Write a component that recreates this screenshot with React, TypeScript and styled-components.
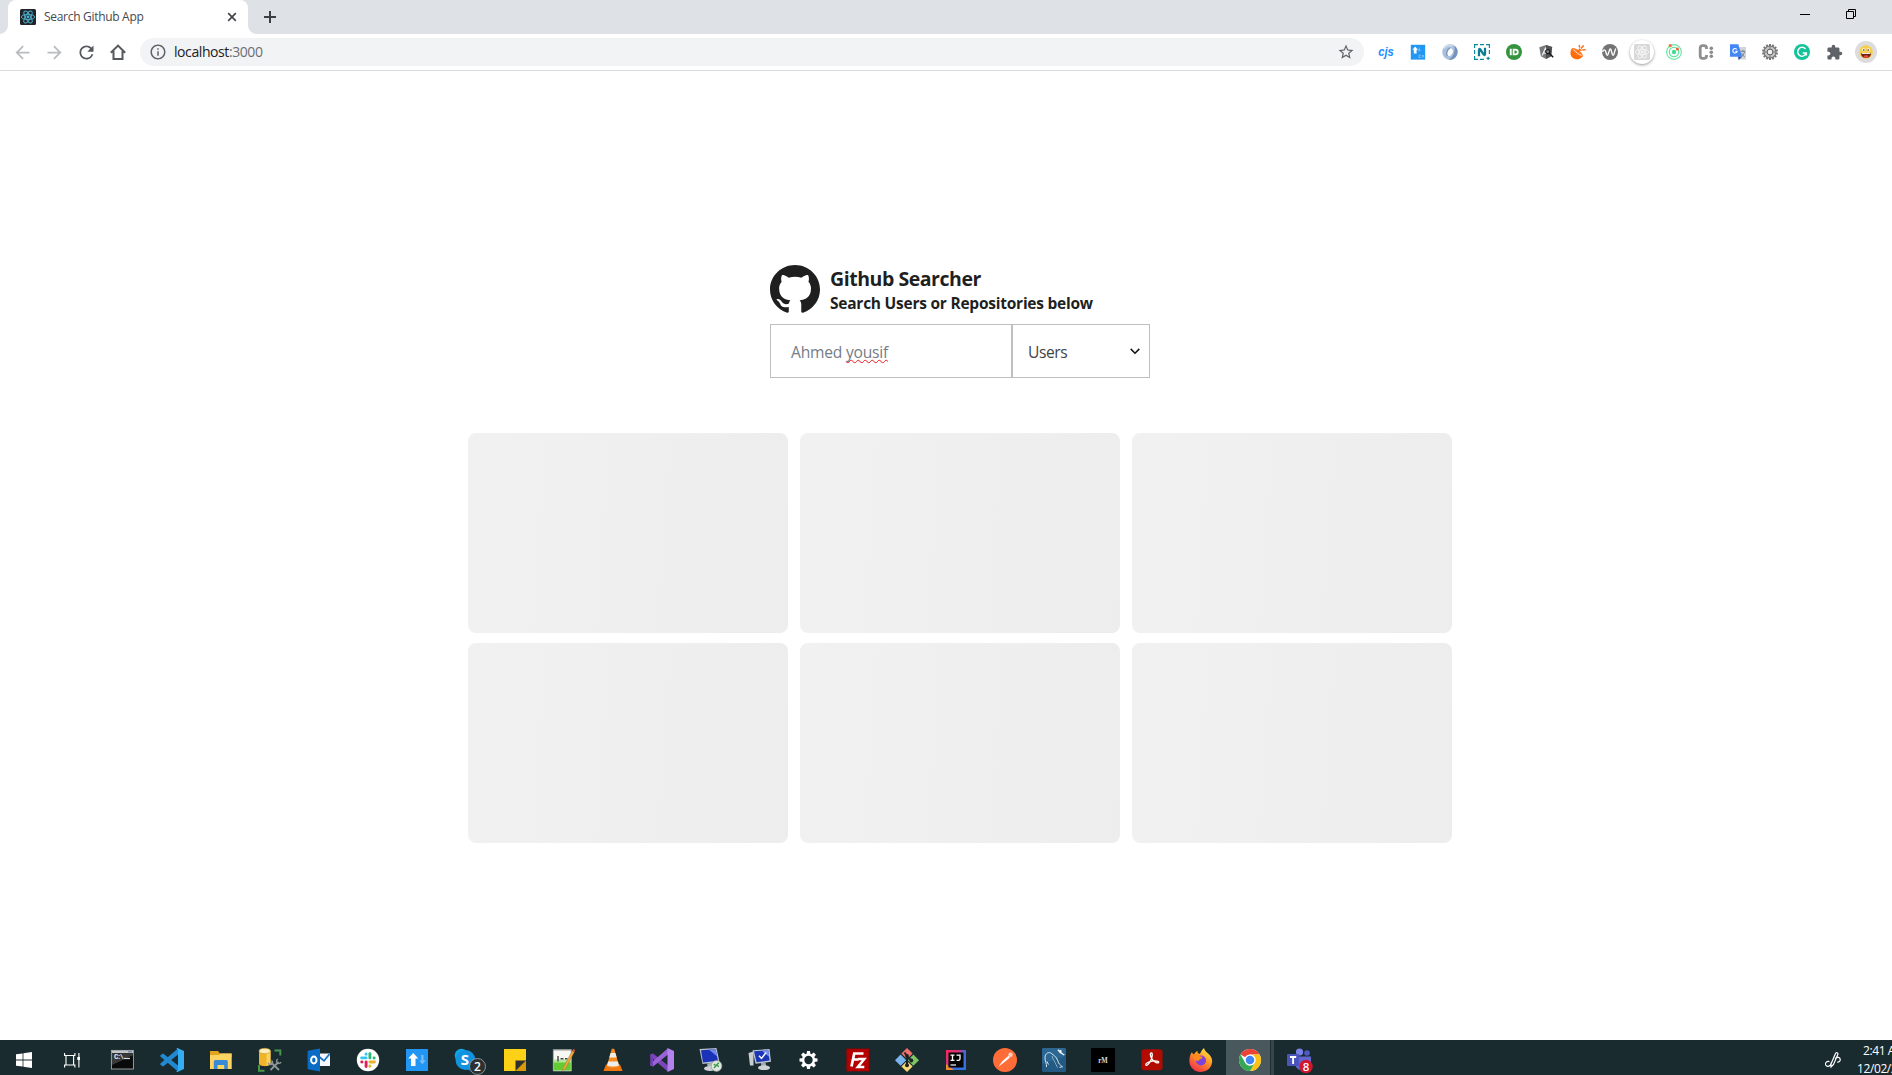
import React from "react";
import styled, { createGlobalStyle, css } from "styled-components";
import {
  MdArrowBack,
  MdArrowForward,
  MdExtension,
  MdInfoOutline,
  MdRefresh,
  MdStarBorder,
} from "react-icons/md";

const uiFont = `"Segoe UI", "Open Sans", "Noto Sans", sans-serif`;

const GlobalStyle = createGlobalStyle`
  * { box-sizing: border-box; }
  html, body { margin: 0; padding: 0; overflow: hidden; background: #fff; }
  body { font-family: ${uiFont}; }
  svg { display: block; flex: none; }
`;

const Screen = styled.div`
  width: 100vw;
  height: 1075px;
  overflow: hidden;
`;

const Desktop = styled.div`
  display: flex;
  flex-direction: column;
  width: 1920px;
  height: 1080px;
`;

/* ---------- browser frame ---------- */

const TabStrip = styled.div`
  display: flex;
  align-items: stretch;
  height: 34px;
  padding-left: 8px;
  background: #dee1e6;
`;

const Tab = styled.div`
  position: relative;
  display: flex;
  align-items: center;
  width: 240px;
  padding: 0 9px 0 12px;
  background: #fff;
  border-radius: 8px 8px 0 0;

  &::before,
  &::after {
    content: "";
    position: absolute;
    bottom: 0;
    width: 8px;
    height: 8px;
  }
  &::before {
    left: -8px;
    background: radial-gradient(circle at 0 0, transparent 7.5px, #fff 8px);
  }
  &::after {
    right: -8px;
    background: radial-gradient(circle at 100% 0, transparent 7.5px, #fff 8px);
  }
`;

const TabTitle = styled.span`
  flex: 1;
  margin-left: 8px;
  font-size: 12px;
  line-height: 16px;
  letter-spacing: -0.3px;
  color: #45494d;
  white-space: nowrap;
`;

const NewTab = styled.div`
  display: flex;
  align-items: center;
  margin-left: 16px;
`;

const WindowButtons = styled.div`
  display: flex;
  gap: 36px;
  margin-left: auto;
  margin-right: 64px;
  padding-top: 9px;
`;

const Toolbar = styled.div`
  display: flex;
  align-items: center;
  height: 37px;
  background: #fff;
  border-bottom: 1px solid #d9dbde;
`;

const NavButtons = styled.div`
  display: flex;
  width: 140px;
  padding-left: 6px;
`;

const NavButton = styled.div<{ $disabled?: boolean }>`
  display: flex;
  align-items: center;
  justify-content: center;
  width: 32px;
  height: 28px;
  color: ${(p) => (p.$disabled ? "#b9bbbe" : "#55595e")};
`;

const AddressBar = styled.div`
  display: flex;
  align-items: center;
  width: 1224px;
  height: 28px;
  padding: 0 9px 0 9px;
  border-radius: 14px;
  background: #f1f3f4;
  color: #5f6368;
`;

const Url = styled.span`
  flex: 1;
  margin-left: 7px;
  font-size: 14px;
  line-height: 20px;
  letter-spacing: -0.42px;
  color: #202124;
`;

const Port = styled.span`
  color: #6b6f74;
`;

const Extensions = styled.div`
  display: flex;
  margin-left: 6px;
`;

const ExtensionSlot = styled.div<{ $disc?: "raised" | "avatar" }>`
  display: flex;
  align-items: center;
  justify-content: center;
  width: 24px;
  height: 24px;
  margin: 0 4px;
  border-radius: 50%;
  ${(p) => p.$disc === "raised" && css`box-shadow: 0 1px 3px rgba(0, 0, 0, 0.4);`}
  ${(p) => p.$disc === "avatar" && css`background: #dcdcdc; width: 22px; height: 22px; margin: 1px 5px;`}
`;

/* ---------- page ---------- */

const Page = styled.main`
  display: flex;
  flex-direction: column;
  align-items: center;
  height: 969px;
  padding-top: 194px;
  background: #fff;
`;

const SearchBox = styled.section`
  width: 380px;
`;

const Brand = styled.header`
  display: flex;
  gap: 10px;
  height: 59px;
  color: #1f1f1f;
`;

const BrandText = styled.div`
  padding-top: 1px;
  white-space: nowrap;
`;

const Title = styled.h1`
  margin: 0;
  font-size: 19.5px;
  line-height: 25px;
  font-weight: 700;
  letter-spacing: -0.45px;
`;

const Subtitle = styled.h2`
  margin: 1px 0 0;
  font-size: 15.5px;
  line-height: 22px;
  font-weight: 700;
  letter-spacing: -0.24px;
`;

const Form = styled.div`
  display: flex;
  height: 54px;
  font-size: 15.6px;
  line-height: 22px;
`;

const Field = styled.div`
  display: flex;
  align-items: center;
  width: 242px;
  padding: 1px 20px 0;
  border: 1px solid #bfbfbf;
  color: #757b88;
  letter-spacing: -0.22px;
  white-space: pre;
`;

const Misspelled = styled.span`
  text-decoration: underline wavy #f01818 1px;
  text-underline-offset: 1px;
  text-decoration-skip-ink: none;
`;

const Select = styled.div`
  display: flex;
  align-items: center;
  justify-content: space-between;
  width: 138px;
  padding: 1px 9px 0 15px;
  border: 1px solid #bfbfbf;
  color: #3f4347;
  letter-spacing: -0.45px;
`;

const Results = styled.section`
  display: grid;
  grid-template-columns: repeat(3, 320px);
  grid-auto-rows: 200px;
  gap: 10px 12px;
  margin-top: 55px;
`;

const Skeleton = styled.div`
  border-radius: 8px;
  background: linear-gradient(94deg, #f1f1f1 0%, #ededed 100%);
`;

/* ---------- taskbar ---------- */

const Taskbar = styled.footer`
  display: flex;
  height: 40px;
  background: #1a2b2f;
`;

const SystemButton = styled.div`
  display: flex;
  align-items: center;
  justify-content: center;
  width: 48px;
`;

const Apps = styled.div`
  display: flex;
  gap: 1px;
  margin-left: 3px;
`;

const AppSlot = styled.div<{ $active?: boolean }>`
  display: flex;
  align-items: center;
  justify-content: center;
  width: 48px;
  ${(p) =>
    p.$active &&
    css`
      background: linear-gradient(90deg, #48585c 0 44px, #1f2d30 44px 45px, #374649 45px 48px);
    `}
`;

const Tray = styled.div`
  display: flex;
  align-items: center;
  margin-left: auto;
  margin-right: 4px;
`;

const Clock = styled.div`
  width: 60px;
  padding-left: 1px;
  text-align: left;
  font-size: 12px;
  line-height: 18px;
  letter-spacing: -0.4px;
  color: #fff;
  white-space: nowrap;
`;

const Time = styled.div`
  padding-left: 6px;
`;

/* ---------- drawings ---------- */

const Atom = ({ size, color, bg, sw = 1.1 }: { size: number; color: string; bg: string; sw?: number }) => (
  <svg width={size} height={size} viewBox="0 0 16 16">
    <rect width="16" height="16" rx="1.5" fill={bg} />
    <g fill="none" stroke={color} strokeWidth={sw}>
      <ellipse cx="8" cy="8" rx="6.7" ry="2.6" />
      <ellipse cx="8" cy="8" rx="6.7" ry="2.6" transform="rotate(60 8 8)" />
      <ellipse cx="8" cy="8" rx="6.7" ry="2.6" transform="rotate(120 8 8)" />
    </g>
    <circle cx="8" cy="8" r="1.4" fill={color} />
  </svg>
);

const HomeIcon = () => (
  <svg width="16" height="16" viewBox="0 0 16 16" fill="none" stroke="currentColor" strokeWidth="2">
    <path d="M.8 8.700 8 1.600l7.200 7.100M3.500 7v8h9V7" />
  </svg>
);

const GithubMark = () => (
  <svg width="50" height="49" viewBox="0 0 16 16" preserveAspectRatio="none" fill="currentColor">
    <path d="M8 0C3.58 0 0 3.58 0 8c0 3.54 2.29 6.53 5.47 7.59.4.07.55-.17.55-.38 0-.19-.01-.82-.01-1.49-2.01.37-2.53-.49-2.69-.94-.09-.23-.48-.94-.82-1.13-.28-.15-.68-.52-.01-.53.63-.01 1.08.58 1.23.82.72 1.21 1.87.87 2.33.66.07-.52.28-.87.51-1.07-1.78-.2-3.64-.89-3.64-3.95 0-.87.31-1.59.82-2.15-.08-.2-.36-1.02.08-2.12 0 0 .67-.21 2.2.82.64-.18 1.32-.27 2-.27s1.36.09 2 .27c1.53-1.04 2.2-.82 2.2-.82.44 1.1.16 1.92.08 2.12.51.56.82 1.27.82 2.15 0 3.07-1.87 3.75-3.65 3.95.29.25.54.73.54 1.48 0 1.07-.01 1.93-.01 2.2 0 .21.15.46.55.38A8.01 8.01 0 0 0 16 8c0-4.42-3.58-8-8-8z" />
  </svg>
);

const Ext = ({ children }: { children: React.ReactNode }) => (
  <svg width="16" height="16" viewBox="0 0 16 16" overflow="visible">
    {children}
  </svg>
);

const App24 = ({ children }: { children: React.ReactNode }) => (
  <svg width="24" height="24" viewBox="0 0 24 24" overflow="visible">
    {children}
  </svg>
);

const teeth = (n: number) => Array.from({ length: n }, (_, i) => (360 / n) * i);

const extensionIcons: { name: string; disc?: "raised" | "avatar"; icon: React.ReactNode }[] = [
  {
    name: "cjs",
    icon: (
      <Ext>
        <text x="8" y="11.5" textAnchor="middle" textLength="15.5" lengthAdjust="spacingAndGlyphs" fontFamily="Liberation Sans" fontStyle="italic" fontWeight="700" fontSize="12.5" fill="#1a8cff">cjs</text>
      </Ext>
    ),
  },
  {
    name: "transfer",
    icon: (
      <Ext>
        <rect x=".8" y=".8" width="14.4" height="14.8" fill="#2196f3" />
        <path d="M5.2 2.6 8 5.8H6.600V9.600H3.800V5.800H2.400z" fill="#fff" />
        <path d="M9.3 3.5v3.200M8.200 5.800l1.100 1.300 1.100-1.300" stroke="#8fc9fa" fill="none" strokeWidth=".9" />
        <path d="M11 11.200H9v2.300h2M12 11l2 2.600M14 11l-2 2.600" stroke="#8fc9fa" fill="none" strokeWidth=".8" />
      </Ext>
    ),
  },
  {
    name: "swirl",
    icon: (
      <Ext>
        <circle cx="8" cy="8" r="7.8" fill="#a9bfdb" />
        <path d="M12.500 1.800A7.800 7.800 0 0 1 6.500 15.600C11.500 13.500 13.500 7 12.500 1.800z" fill="#7292ba" />
        <path d="M2 4.500C4.500 1.200 8 1 10.500 2.300" stroke="#d2deec" strokeWidth="1.500" fill="none" />
        <ellipse cx="8" cy="8.200" rx="2.700" ry="3.900" fill="#fff" transform="rotate(22 8 8)" />
        <path d="M5.300 12c-1.500-3 0-6.500 2.700-8" stroke="#6f8fb8" strokeWidth="1.200" fill="none" />
      </Ext>
    ),
  },
  {
    name: "nimbus",
    icon: (
      <Ext>
        <path d="M.6 4V.6H4M6 .6h4M12 .6h3.400V4M.6 6v4M15.400 6v4M.6 12v3.400H4M6 15.400h4" stroke="#0d8a9e" strokeWidth="1.200" fill="none" />
        <path d="M12.500 14.400h3.300M14.150 12.800v3.300" stroke="#0d8a9e" strokeWidth="1.200" />
        <path d="M5 12.300V6.300q0-2.300 1.500-.6l3 4.600q1.500 1.700 1.500-.6V3.800" stroke="#0d7e92" strokeWidth="2.300" fill="none" />
      </Ext>
    ),
  },
  {
    name: "pushbullet",
    icon: (
      <Ext>
        <circle cx="8" cy="8" r="8" fill="#34933f" />
        <path d="M3.800 4.700h1.900v6.600H3.800zM6.700 4.700h2.700a3.300 3.300 0 0 1 0 6.600H6.700z" fill="#fff" />
        <path d="M8.500 6.400h.8a1.600 1.600 0 0 1 0 3.200h-.8z" fill="#34933f" />
      </Ext>
    ),
  },
  {
    name: "augury",
    icon: (
      <Ext>
        <path d="M8 1 14.200 3l-1.100 9.200L8 15l-5.100-2.800L1.300 3.200z" fill="#77797a" />
        <path d="M8 1 14.200 3l-1.100 9.200L8 15z" fill="#505253" />
        <path d="M4.200 11.500 7.400 4.200 9 8M5.500 9.200h3" stroke="#f2f2f2" strokeWidth="1.200" fill="none" />
        <circle cx="9.800" cy="7.600" r="2" fill="#8b8d8e" stroke="#17191a" strokeWidth="1.100" />
        <path d="m11.200 9.200 4 4" stroke="#17191a" strokeWidth="1.500" />
      </Ext>
    ),
  },
  {
    name: "dish",
    icon: (
      <Ext>
        <path d="M2.300 4.200 12.800 12.200C10 16.200 5 16 2.300 13.500-.3 11 0 7 2.300 4.200z" fill="#ff6a0a" />
        <path d="M2.300 4.200C5 2.800 13.800 9 12.800 12.200 9 13.500 1 7.500 2.300 4.200z" fill="#ff7d2a" />
        <path d="M3.600 5.500C6 8.500 8.500 10.300 11.800 11.400" stroke="#ffe6d6" strokeWidth=".9" fill="none" />
        <path d="m7.600 8.200 2-2.600M9 4.700l2.500 2M9.700 3.600 9 1M11 4.500l2.700-3M12.300 6l3.500-.4" stroke="#ff6a0a" strokeWidth="1.400" />
      </Ext>
    ),
  },
  {
    name: "wave",
    icon: (
      <Ext>
        <circle cx="8" cy="8" r="8" fill="#737373" />
        <path d="M.5 8C1.500 5.500 2.800 5.200 3.500 7l1.100 3.500c.4 1 1 1 1.400 0l1.600-4.700c.4-1.200 1-1.200 1.400 0l1.400 4.700c.4 1 1 1 1.400 0l1.900-6" stroke="#fff" strokeWidth="1.300" fill="none" />
      </Ext>
    ),
  },
  { name: "react", disc: "raised", icon: <Atom size={16} color="#f5f5f5" bg="#d8d8d8" sw={0.9} /> },
  {
    name: "radar",
    icon: (
      <Ext>
        <g fill="none" stroke="#63e6a2">
          <circle cx="8" cy="8" r="7.400" strokeWidth="1.100" />
          <circle cx="8" cy="8" r="4.700" strokeWidth="1.300" />
        </g>
        <circle cx="8" cy="8" r="2.200" fill="#45dd91" />
        <circle cx="4.200" cy="1.700" r="1.600" fill="#f4743b" />
        <circle cx="11.400" cy="5" r="1.500" fill="#f4602f" />
      </Ext>
    ),
  },
  {
    name: "colon",
    icon: (
      <Ext>
        <path d="M8.500 5V4Q8.500 1.700 6 1.700H4.700Q2.200 1.700 2.200 4v8q0 2.300 2.500 2.300H6Q8.500 14.300 8.500 12v-1" stroke="#8f8f8f" strokeWidth="2.800" fill="none" />
        <g fill="#8b8b8b">
          <circle cx="13.300" cy="4.300" r="1.800" />
          <circle cx="13.300" cy="8.300" r="1.800" />
          <circle cx="13.300" cy="12.300" r="1.800" />
        </g>
      </Ext>
    ),
  },
  {
    name: "translate",
    icon: (
      <Ext>
        <path d="M6 3h10v12.500H8z" fill="#d3d5d8" />
        <path d="M0 .3h8.300l3.900 12.500H0z" fill="#4387f5" />
        <path d="M8 12.800h4.200l-3.600 3.200z" fill="#2f55b8" />
        <path d="M10.500 7.300h4.800M12.900 5.800v1.500M11.500 12.500c1.700-1 2.700-3 3-5M11.700 9c.5 1.800 1.700 3 3 3.700" stroke="#6e7a8c" strokeWidth=".9" fill="none" />
        <path d="M6.700 5.300A2.200 2.200 0 1 0 7.200 7.200H5.200" stroke="#fff" strokeWidth="1.100" fill="none" />
      </Ext>
    ),
  },
  {
    name: "gear",
    icon: (
      <Ext>
        {teeth(14).map((a) => (
          <rect key={a} x="7" y="0" width="2" height="3" fill="#777" transform={`rotate(${a} 8 8)`} />
        ))}
        <circle cx="8" cy="8" r="6" fill="#c4c4c4" stroke="#6a6a6a" strokeWidth="1" />
        <circle cx="8" cy="8" r="2.900" fill="#f2f2f2" stroke="#5c5c5c" strokeWidth="1" />
        <path d="M8 2.800v2M8 11.200v2M2.800 8h2M11.200 8h2" stroke="#777" />
      </Ext>
    ),
  },
  {
    name: "grammar",
    icon: (
      <Ext>
        <circle cx="8" cy="8" r="8" fill="#15c39a" />
        <path d="M11.500 5A4.400 4.400 0 1 0 12.200 9.300M8.700 9h3.600v2.600" stroke="#fff" strokeWidth="1.500" fill="none" />
      </Ext>
    ),
  },
  { name: "extensions", icon: <MdExtension size={17} color="#5f6368" /> },
  {
    name: "avatar",
    disc: "avatar",
    icon: (
      <svg width="14" height="14" viewBox="0 0 14 14">
        <circle cx="7" cy="7" r="6.800" fill="#f5cf4c" />
        <path d="M2 8h10c0 3.200-2 5-5 5S2 11.200 2 8z" fill="#6d1f16" />
        <path d="M2.700 8h8.600v.9H2.700z" fill="#fff" />
        <ellipse cx="7" cy="11.600" rx="2.600" ry="1.300" fill="#e9483e" />
        <ellipse cx="4.600" cy="4.700" rx="1.500" ry="1.700" fill="#fff6d8" />
        <ellipse cx="9.400" cy="4.700" rx="1.500" ry="1.700" fill="#fff6d8" />
        <circle cx="4.800" cy="5" r=".8" fill="#3b2a10" />
        <circle cx="9.200" cy="5" r=".8" fill="#3b2a10" />
      </svg>
    ),
  },
];

const appIcons: { name: string; active?: boolean; icon: React.ReactNode }[] = [
  {
    name: "terminal",
    icon: (
      <App24>
        <rect x=".4" y="2.400" width="22" height="18.600" fill="#0a0a0a" stroke="#a4a8aa" strokeWidth=".9" />
        <rect x=".8" y="2.600" width="21.200" height="2.500" fill="#c3c7ca" />
        <path d="M17 3.800h4" stroke="#5a6ea0" />
        <path d="M1 5.200h21v2L1 17z" fill="#3a3a3a" />
        <text x="3" y="11" fontFamily="Liberation Mono" fontWeight="700" fontSize="7" fill="#eee" textLength="10">C:\</text>
        <path d="M13 10.500h6" stroke="#ddd" strokeWidth="1.200" />
      </App24>
    ),
  },
  {
    name: "code",
    icon: (
      <App24>
        <path d="m.3 7.300 2.200-1.600 1 .1L18 17.500V23.500L.6 8.700z" fill="#1f8ad2" />
        <path d="m.3 16.700 2.200 1.600 1-.1L18 6.500V.5L.6 15.300z" fill="#2488cf" />
        <path d="M17.500 0 24 3v18l-6.500 3c-.6 0-.9-.3-1.200-.6l1.700-1.400V2L16.300.6z" fill="#35adf2" />
      </App24>
    ),
  },
  {
    name: "files",
    icon: (
      <App24>
        <path d="M1 3h8l2 2.500h11.500V9H1z" fill="#e3a41b" />
        <path d="M1 7h9l1.500-1.500h11.200V21H1z" fill="#fcd462" />
        <path d="M4.800 21v-7.500q0-1.500 1.500-1.500h11q1.500 0 1.500 1.500V21h-3.600v-4H8.500v4z" fill="#3b8ad8" />
      </App24>
    ),
  },
  {
    name: "database",
    icon: (
      <App24>
        <path d="M1 3v12.500c0 3.500 11.500 3.500 11.500 0V3z" fill="#f0b429" />
        <path d="M8.500 5v12.600c2.500-.3 4-1 4-2.100V3z" fill="#fbd25f" />
        <ellipse cx="6.750" cy="3" rx="5.750" ry="2.700" fill="#fdeeb9" stroke="#cf9516" strokeWidth=".6" />
        <path d="M16.500 2.500h5.800V7.500M1 17v5.800h5.500" stroke="#46964b" strokeWidth="2" fill="none" />
        <path d="m12.500 22 8-8M13 14.500l8 7.500" stroke="#8e9698" strokeWidth="1.800" />
        <path d="M10.200 14.500a2.200 2.200 0 1 0 3-2M20 11a2.300 2.300 0 1 0 3 3" stroke="#8e9698" strokeWidth="1.300" fill="none" />
      </App24>
    ),
  },
  {
    name: "mail",
    icon: (
      <App24>
        <path d="M12 5.500h11V18H12z" fill="#f4f8fc" />
        <path d="m12.500 9 4.500 3.800L22.600 6" stroke="#1671c5" strokeWidth="1.700" fill="none" />
        <path d="M.6 2.800 13 .4v23.200L.6 21.200z" fill="#0a6cc4" />
        <ellipse cx="6.800" cy="12" rx="2.700" ry="3.500" fill="none" stroke="#fff" strokeWidth="2" />
      </App24>
    ),
  },
  {
    name: "slack",
    icon: (
      <App24>
        <circle cx="12" cy="12" r="11.200" fill="#fff" />
        <g strokeWidth="2.900" strokeLinecap="round">
          <path d="M10.100 6v.2" stroke="#36c5f0" /><path d="M5.600 9.900h4.500" stroke="#36c5f0" />
          <path d="M13.900 5.600v4.300" stroke="#2eb67d" /><path d="M18 10h.2" stroke="#2eb67d" />
          <path d="M13.900 14h4.500" stroke="#ecb22e" /><path d="M13.900 18v.2" stroke="#ecb22e" />
          <path d="M10.100 14v4.500" stroke="#e01e5a" /><path d="M5.700 14h.3" stroke="#e01e5a" />
        </g>
      </App24>
    ),
  },
  {
    name: "transfer",
    icon: (
      <App24>
        <rect x="1" y="1" width="22" height="22" fill="#2196f3" />
        <path d="M8.300 5 13.300 10.600h-2.800V18H6v-7.400H3.200z" fill="#fff" />
        <path d="M16.300 7h2.200v5.500h2.200l-3.300 3.700-3.300-3.700h2.200z" fill="#79bef8" />
      </App24>
    ),
  },
  {
    name: "skype",
    icon: (
      <App24>
        <circle cx="7.500" cy="7.500" r="6.800" fill="#0fa5e8" />
        <circle cx="16" cy="16" r="6.500" fill="#0078d4" />
        <circle cx="11.500" cy="12" r="10" fill="#1193df" />
        <text x="11" y="17.200" textAnchor="middle" fontFamily="Open Sans" fontWeight="700" fontSize="15" fill="#fff">S</text>
        <circle cx="23.500" cy="18.500" r="8" fill="#2b3033" stroke="#8c9395" strokeWidth="1" />
        <text x="23.500" y="23" textAnchor="middle" fontFamily="Open Sans" fontWeight="600" fontSize="12" fill="#fff">2</text>
      </App24>
    ),
  },
  {
    name: "notes",
    icon: (
      <App24>
        <path d="M1 1h22v11L12.500 23H1z" fill="#fcd116" />
        <path d="M12.500 12.500H23L12.500 23z" fill="#303030" />
        <path d="M23 12.500V23H12.500z" fill="#d99a08" />
      </App24>
    ),
  },
  {
    name: "notepad",
    icon: (
      <App24>
        <path d="M1.300 1.500h18v21.500h-18z" fill="#f7f7f3" stroke="#a7aaa5" strokeWidth=".7" />
        <path d="M1.800 13.500h17v9h-17z" fill="#62cc32" />
        <path d="M1.800 11.500h17v3h-17z" fill="#b4e79a" />
        <path d="M1.500 2h17.500" stroke="#777" strokeDasharray="1 1" strokeWidth="1.600" />
        <path d="M6 8v5.500M8.500 10.700h3M13 10.700h2.500" stroke="#444" strokeWidth="1.400" />
        <path d="M11 20 20.500 2.500l2 1.200L13.500 20.700l-3 2z" fill="#eda93c" stroke="#99662b" strokeWidth=".4" />
        <path d="m20.300 2.700 1-1.900 2 1.100-1 2z" fill="#c9493f" />
      </App24>
    ),
  },
  {
    name: "cone",
    icon: (
      <App24>
        <path d="M5 16.500h14l2.500 6.500h-19z" fill="#ef7810" />
        <path d="M10.800 .8h2.400L18.300 18.500c-3 2-9.600 2-12.600 0z" fill="#f68b1f" />
        <path d="M9.600 5h4.800l1.300 4.500H8.300zM7.100 13.500h9.800l1.100 3.900c-3 1.500-9 1.500-12 0z" fill="#ededeb" />
      </App24>
    ),
  },
  {
    name: "studio",
    icon: (
      <App24>
        <path d="M.3 6.500 3 5.500 18 17.500v6.200L.3 8.500z" fill="#7a46b9" />
        <path d="m.3 17.500 2.700 1L18 6.500V.3L.3 15.500z" fill="#9b62d6" />
        <path d="M.3 6.500 3 5.500v13l-2.700-1z" fill="#7440b5" />
        <path d="M17.500 0 24 3v18l-6.500 3z" fill="#b482ec" />
      </App24>
    ),
  },
  {
    name: "remote",
    icon: (
      <App24>
        <path d="M.5 1 17.500 0l3 14-17 2z" fill="#b8c1cd" />
        <path d="M2 2.200 16.500 1.300l2.500 11.400-15 1.800z" fill="#1932b8" />
        <path d="M10 1.800 16.500 1.300l1.700 7.200z" fill="#6f86ea" />
        <path d="m8 15.500 6-.7 1 4.200-6 1z" fill="#aeb5bc" />
        <ellipse cx="11" cy="20.500" rx="6" ry="2.500" fill="#cdd1d4" />
        <circle cx="17.500" cy="18" r="5.400" fill="#e2e7e2" stroke="#8d9691" strokeWidth=".7" />
        <path d="m14.800 16 2.100 1.800-1.900 2.300M19.800 14.700l-2 2 2 2" stroke="#3d9d49" strokeWidth="1.500" fill="none" />
      </App24>
    ),
  },
  {
    name: "monitor",
    icon: (
      <App24>
        <path d="m.5 5 5-1.500v14L2 17.500z" fill="#c9ced1" />
        <path d="M4.500 2.200 21.500 1l1.500 12.800-15.500 2z" fill="#bcc6d2" />
        <path d="M6 3.300 20.300 2.300l1.300 10.200-13 1.800z" fill="#1b35b5" />
        <path d="M14 2.700l6.300-.4.800 6.500z" fill="#7b93ec" />
        <path d="m11 7.800 2.500 2.700 4.500-6" stroke="#fff" strokeWidth="1.400" fill="none" />
        <path d="m13 15 4.500-.6 1 4.600h-5z" fill="#a6adb3" />
        <ellipse cx="16" cy="19.700" rx="6" ry="2.400" fill="#cfd3d6" />
      </App24>
    ),
  },
  {
    name: "settings",
    icon: (
      <App24>
        {teeth(8).map((a) => (
          <path key={a} d="M10 3h3l.6 4H9.400z" fill="#fff" transform={`rotate(${a} 11.500 12)`} />
        ))}
        <circle cx="11.500" cy="12" r="5.400" fill="none" stroke="#fff" strokeWidth="2.400" />
      </App24>
    ),
  },
  {
    name: "ftp",
    icon: (
      <App24>
        <rect x=".6" y=".8" width="22.500" height="22.500" fill="#b30000" stroke="#8b0000" strokeWidth="1" strokeDasharray="1 1" />
        <path d="M5.500 18.500 8.200 5.500h9.300M7 11.500h5.500" stroke="#fff" strokeWidth="2.700" fill="none" />
        <path d="M12 11h6.300L11.800 19h6.500" stroke="#fff" strokeWidth="2.500" fill="none" />
      </App24>
    ),
  },
  {
    name: "git",
    icon: (
      <App24>
        <path d="m12 0 5.600 5.600L12 11.200 6.400 5.600z" fill="#f0706c" />
        <path d="m5.600 6.600 5.600 5.600-5.600 5.600L0 12.200z" fill="#79b5ef" />
        <path d="m18.400 6.600 5.600 5.600-5.600 5.600-5.600-5.600z" fill="#7fc463" />
        <path d="m12 13 5.600 5.500L12 24l-5.600-5.500z" fill="#f5d873" />
        <path d="M9.500 4.500 12 8v10M12 8.500l4.500 4" stroke="#182426" strokeWidth="2" fill="none" />
        <circle cx="12" cy="8" r="1.900" fill="#182426" /><circle cx="16.300" cy="12.500" r="1.900" fill="#182426" /><circle cx="12" cy="17.200" r="2" fill="#182426" />
      </App24>
    ),
  },
  {
    name: "idea",
    icon: (
      <App24>
        <defs>
          <linearGradient id="idea" x1="0" y1="0" x2="1" y2="1">
            <stop offset="0" stopColor="#fe2857" /><stop offset=".35" stopColor="#d6337b" />
            <stop offset=".5" stopColor="#4967d9" /><stop offset="1" stopColor="#2876e6" />
          </linearGradient>
        </defs>
        <rect x="2" y="2" width="20" height="20" fill="url(#idea)" />
        <path d="M2 16v6h8z" fill="#f08a35" />
        <rect x="4.500" y="4.500" width="15" height="15" fill="#050505" />
        <path d="M6.500 7.200h4M8.500 7.200v5M6.500 12.300h4M12.500 7.200H16v3.500q0 1.700-1.700 1.700h-1.800" stroke="#fff" strokeWidth="1.300" fill="none" />
        <path d="M6.500 17H12" stroke="#fff" strokeWidth="1.200" />
      </App24>
    ),
  },
  {
    name: "postman",
    icon: (
      <App24>
        <circle cx="12" cy="12" r="12" fill="#ff6c37" />
        <path d="M5.500 18.500 9.500 13l6-5.200 1.500 1.700-6 4.900z" fill="#fff" />
        <circle cx="17.500" cy="6.800" r="2.200" fill="#fbd2c2" />
      </App24>
    ),
  },
  {
    name: "mysql",
    icon: (
      <App24>
        <rect width="24" height="24" rx="1.500" fill="#235a83" />
        <path d="M0 1.500Q0 0 1.500 0h21Q24 0 24 1.500V8L0 16z" fill="#2c6794" />
        <path d="M4.500 19c.3-4-1.700-5.500-1.500-9.500C3.200 5 7 3.500 9.500 5.500c4 2.500 6 5.500 7 9.300 1 2 3 3 4 4l-3 .5M5 13.500l1.500 3" stroke="#dce8ef" strokeWidth="1" fill="none" />
        <path d="M10 8c.7 3.500 3 5.500 4 8.500l1.500 3" stroke="#9dbdd1" strokeWidth=".8" fill="none" />
        <path d="M16 1.800 18.300 4.500l4 2.500M18.500 2l.5 2.500" stroke="#fff" strokeWidth="1.400" fill="none" />
      </App24>
    ),
  },
  {
    name: "rm",
    icon: (
      <App24>
        <rect width="24" height="24" fill="#000" />
        <text x="12" y="14.800" textAnchor="middle" textLength="9.500" lengthAdjust="spacingAndGlyphs" fontFamily="Liberation Serif" fontWeight="700" fontSize="7.500" fill="#ddd">rM</text>
      </App24>
    ),
  },
  {
    name: "pdf",
    icon: (
      <App24>
        <rect x="1.500" y="1.200" width="21" height="21" rx="3" fill="#b30b00" />
        <path d="M11.500 5c-2 0-1.200 3 .5 6 1.800 3.200 5.700 4.500 6.600 3.500 1-1.200-2.900-2.200-6.500-1.400-3.600.7-7 2.400-6.300 3.900.8 1.500 3.600-1.600 5-4.600 1.500-3 2-7.400.7-7.400z" stroke="#fff" strokeWidth="1.300" fill="none" />
      </App24>
    ),
  },
  {
    name: "firefox",
    icon: (
      <App24>
        <defs>
          <linearGradient id="fox" x1=".8" y1="0" x2=".2" y2="1">
            <stop offset="0" stopColor="#fff04a" /><stop offset=".4" stopColor="#ff9a23" /><stop offset="1" stopColor="#f0294f" />
          </linearGradient>
        </defs>
        <path d="M15 0c.5 2.500 2.300 3.700 3.800 5.300 2.300 2 4.400 4.500 4.400 8A11.400 10.900 0 0 1 .4 13c0-3.500.8-6.500 2.400-8.700l1.700 2.200C6 5.200 7 3.500 8.400 2.700c-.2 1.800.6 2.800 2.300 3.200C12 4.500 12.700 1.800 15 0z" fill="url(#fox)" />
        <circle cx="12" cy="12.500" r="5" fill="#7b42e0" />
        <path d="M4.500 6.500c3-1 5.500 0 6.500 1.800 1.500.2 2.500.5 2.700 1.200-1.500 2-4 1.400-3.700 3.500-2-.3-4.500 0-5-2.500z" fill="#ff8b1f" />
      </App24>
    ),
  },
  {
    name: "chrome",
    active: true,
    icon: (
      <App24>
        <circle cx="12" cy="12" r="11" fill="#fff" />
        <path d="M12 1a11 11 0 0 1 9.530 5.500H12A5.500 5.500 0 0 0 7.240 9.250L2.470 6.500A11 11 0 0 1 12 1z" fill="#ea4335" />
        <path d="M21.530 6.500A11 11 0 0 1 12 23l4.760-8.250A5.500 5.500 0 0 0 12 6.500z" fill="#fbc116" />
        <path d="M12 23A11 11 0 0 1 2.470 6.500l4.770 8.250A5.500 5.500 0 0 0 16.760 14.750z" fill="#34a853" />
        <circle cx="12" cy="12" r="5.500" fill="#fff" />
        <circle cx="12" cy="12" r="4.300" fill="#4285f4" />
      </App24>
    ),
  },
  {
    name: "teams",
    icon: (
      <App24>
        <circle cx="12.500" cy="4" r="3.600" fill="#7b83eb" />
        <circle cx="20" cy="5" r="2.800" fill="#5059c9" />
        <path d="M8 8.500h16v9q-1 5-7 5.500-7-.5-9-6z" fill="#6068d2" />
        <rect x="0" y="6" width="12" height="12" rx="1" fill="#4b53bc" />
        <path d="M3 9h6.200M6.100 9v7" stroke="#fff" strokeWidth="1.900" />
        <circle cx="19" cy="18.500" r="6.700" fill="#d3152f" />
        <text x="19" y="22.700" textAnchor="middle" fontFamily="Open Sans" fontWeight="600" fontSize="11.500" fill="#fff">8</text>
      </App24>
    ),
  },
];

export default function App() {
  return (
    <Screen>
      <GlobalStyle />
      <Desktop>
        <TabStrip>
          <Tab>
            <Atom size={16} color="#4eb4ce" bg="#20232a" sw={0.9} />
            <TabTitle>Search Github App</TabTitle>
            <svg width="14" height="14" viewBox="0 0 14 14">
              <path d="m3.200 3.200 7.600 7.600m0-7.600-7.600 7.600" stroke="#44474b" strokeWidth="1.700" />
            </svg>
          </Tab>
          <NewTab>
            <svg width="12" height="12" viewBox="0 0 12 12">
              <path d="M6 0v12M0 6h12" stroke="#3c4043" strokeWidth="2" />
            </svg>
          </NewTab>
          <WindowButtons>
            <svg width="10" height="10" viewBox="0 0 10 10">
              <path d="M0 5.500h10" stroke="#000" />
            </svg>
            <svg width="10" height="10" viewBox="0 0 10 10">
              <path d="M.5 2.500h7v7h-7zM2.500 2.500v-2h7v7h-2" stroke="#000" fill="none" />
            </svg>
          </WindowButtons>
        </TabStrip>
        <Toolbar>
          <NavButtons>
            <NavButton $disabled><MdArrowBack size={21} /></NavButton>
            <NavButton $disabled><MdArrowForward size={21} /></NavButton>
            <NavButton><MdRefresh size={21} /></NavButton>
            <NavButton><HomeIcon /></NavButton>
          </NavButtons>
          <AddressBar>
            <MdInfoOutline size={18} />
            <Url>localhost<Port>:3000</Port></Url>
            <MdStarBorder size={18} />
          </AddressBar>
          <Extensions>
            {extensionIcons.map((e) => (
              <ExtensionSlot key={e.name} $disc={e.disc}>{e.icon}</ExtensionSlot>
            ))}
          </Extensions>
        </Toolbar>

        <Page>
          <SearchBox>
            <Brand>
              <GithubMark />
              <BrandText>
                <Title>Github Searcher</Title>
                <Subtitle>Search Users or Repositories below</Subtitle>
              </BrandText>
            </Brand>
            <Form>
              <Field>Ahmed <Misspelled>yousif</Misspelled></Field>
              <Select>
                Users
                <svg width="10" height="7" viewBox="0 0 10 7">
                  <path d="m.7.900 4.300 4.300L9.300.900" stroke="#111" strokeWidth="1.500" fill="none" />
                </svg>
              </Select>
            </Form>
          </SearchBox>
          <Results>
            {Array.from({ length: 6 }, (_, i) => (
              <Skeleton key={i} />
            ))}
          </Results>
        </Page>

        <Taskbar>
          <SystemButton>
            <svg width="16" height="16" viewBox="0 0 16 16" fill="#fff">
              <path d="M0 2.300 6.600 1.400v6.200H0zM7.400 1.300 16 0v7.600H7.400zM0 8.400h6.600v6.200L0 13.700zM7.400 8.400H16V16l-8.600-1.200z" />
            </svg>
          </SystemButton>
          <SystemButton>
            <svg width="16" height="16" viewBox="0 0 16 16" fill="none" stroke="#fff" strokeWidth="1.100">
              <path d="M.6 1v2.500h10.300V1M.6 15.500v-2.500h10.300v2.500M2 3.500v9.500M9.600 3.500v9.500M14.900 1v14.500" />
              <path d="M13.300 5h2.700v3h-2.700z" fill="#fff" stroke="none" />
            </svg>
          </SystemButton>
          <Apps>
            {appIcons.map((a) => (
              <AppSlot key={a.name} $active={a.active}>{a.icon}</AppSlot>
            ))}
          </Apps>
          <Tray>
            <svg width="31" height="18" viewBox="0 0 31 18" fill="none" stroke="#fff" strokeWidth="1.200">
              <path d="M4.500 10.500C1 10 0 12.500.7 14c1 2 4.300 1.800 5.300-1L10.500 2.500c.7-1.700 3-.7 2.300 1L8.500 13.500 6 16v-4.500M10 7.500c2.500-2 5-1.200 5.200.8.300 2-1.500 3.200-3 2.700" />
            </svg>
            <Clock>
              <Time>2:41 A</Time>
              <div>12/02/2</div>
            </Clock>
          </Tray>
        </Taskbar>
      </Desktop>
    </Screen>
  );
}
